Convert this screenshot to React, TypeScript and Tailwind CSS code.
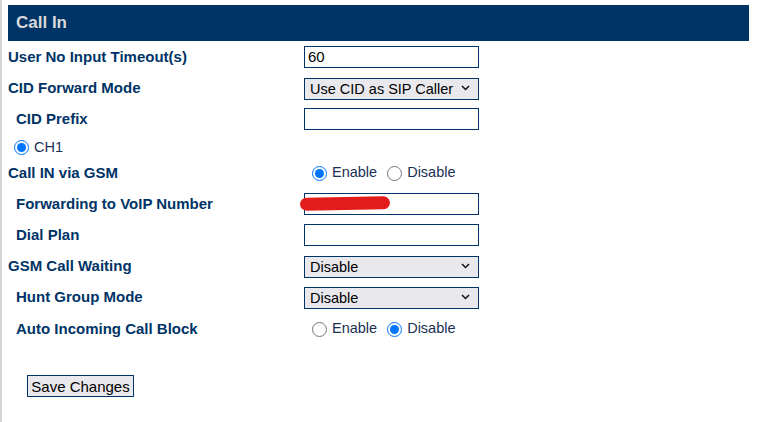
import React from "react";

const label = "text-[15px] font-bold text-[#003366]";

function TextBox({ value = "" }: { value?: string }) {
  return (
    <input
      type="text"
      defaultValue={value}
      className="w-[175px] h-[22px] border border-[#003366] bg-white px-[3px] text-[15px] text-black outline-none"
    />
  );
}

function Select({ value }: { value: string }) {
  return (
    <div className="relative w-[175px] h-[22px]">
      <select
        defaultValue={value}
        className="appearance-none w-full h-full border border-[#003366] bg-[#e9e9ed] pl-[5px] text-[14.5px] text-black outline-none"
      >
        <option>{value}</option>
      </select>
      <svg
        className="pointer-events-none absolute right-[9px] top-[8px]"
        width="9"
        height="6"
        viewBox="0 0 9 6"
      >
        <path d="M1 1l3.5 3.5L8 1" fill="none" stroke="#111" strokeWidth="1.5" />
      </svg>
    </div>
  );
}

function Radio({ checked, text, name }: { checked?: boolean; text: string; name: string }) {
  return (
    <label className="flex items-center gap-[5px] text-[14.5px] text-[#1b2f55]">
      <input
        type="radio"
        name={name}
        defaultChecked={checked}
        className="w-[15px] h-[15px] m-0 accent-[#0075ff]"
      />
      <span>{text}</span>
    </label>
  );
}

function Row({
  title,
  indent,
  h = "h-[31px]",
  extra = "",
  children,
}: {
  title: string;
  indent?: boolean;
  h?: string;
  extra?: string;
  children?: React.ReactNode;
}) {
  return (
    <div className={`flex items-center ${h} ${extra}`}>
      <div className={`w-[296px] ${indent ? "pl-[8px]" : ""} ${label}`}>{title}</div>
      <div className="flex items-center">{children}</div>
    </div>
  );
}

export default function App() {
  return (
    <div
      className="min-h-[422px] bg-white border-l-2 border-[#d4d4d4] pl-[6px] pt-[5px]"
      style={{ fontFamily: '"Liberation Sans", Arial, sans-serif' }}
    >
      <div className="w-[741px] h-[36px] bg-[#003366] flex items-center pl-[8px]">
        <span className="text-[17px] font-bold text-[#d9d9d9]">Call In</span>
      </div>

      <div className="pt-[0.5px]">
        <Row title="User No Input Timeout(s)">
          <TextBox value="60" />
        </Row>
        <Row title="CID Forward Mode">
          <Select value="Use CID as SIP Caller" />
        </Row>
        <Row title="CID Prefix" indent>
          <TextBox />
        </Row>

        <div className="h-[26px] flex items-center pl-[6px]">
          <label className="flex items-center gap-[5px] text-[14.5px] text-[#1b2f55]">
            <input
              type="radio"
              name="ch"
              defaultChecked
              className="w-[15px] h-[15px] m-0 accent-[#0075ff]"
            />
            <span>CH1</span>
          </label>
        </div>

        <Row title="Call IN via GSM" h="h-[25px]">
          <div className="flex items-center gap-[10px] pl-[8px]">
            <Radio name="gsm" checked text="Enable" />
            <Radio name="gsm" text="Disable" />
          </div>
        </Row>

        <Row title="Forwarding to VoIP Number" indent extra="mt-[3px]">
          <div className="relative">
            <TextBox />
            <div className="absolute left-[-4px] top-[5px] w-[90px] h-[13px] rounded-full bg-[#e21c1c] -rotate-1" />
          </div>
        </Row>
        <Row title="Dial Plan" indent>
          <TextBox />
        </Row>
        <Row title="GSM Call Waiting">
          <Select value="Disable" />
        </Row>
        <Row title="Hunt Group Mode" indent>
          <Select value="Disable" />
        </Row>
        <Row title="Auto Incoming Call Block" indent h="h-[33px]">
          <div className="flex items-center gap-[10px] pl-[8px]">
            <Radio name="block" text="Enable" />
            <Radio name="block" checked text="Disable" />
          </div>
        </Row>
      </div>

      <div className="pt-[29px] pl-[19px]">
        <button className="h-[22px] w-[107px] border border-[#003366] bg-[#e9e9ed] text-[15px] text-black">
          Save Changes
        </button>
      </div>
    </div>
  );
}
